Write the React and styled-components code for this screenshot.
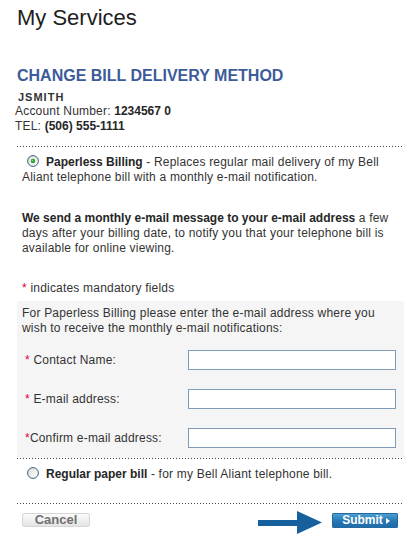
import React from 'react';
import styled, { createGlobalStyle } from 'styled-components';

const GlobalStyle = createGlobalStyle`
  body {
    margin: 0;
    background: #fff;
    font-family: "Liberation Sans", Arial, sans-serif;
    color: #333;
  }
`;

const Page = styled.div`
  width: 387px;
  padding: 5px 2px 0 17px;
  font-size: 12px;
  line-height: 15px;
  letter-spacing: 0.2px;

  b {
    letter-spacing: 0;
    color: #262626;
  }
`;

const Title = styled.h1`
  margin: 0;
  font-size: 22px;
  line-height: 26px;
  font-weight: normal;
  letter-spacing: 0;
  color: #1e1e1e;
`;

const Heading = styled.h2`
  margin: 35px 0 0;
  font-size: 16px;
  line-height: 19px;
  font-weight: bold;
  letter-spacing: 0;
  color: #3d5b99;
`;

const AccountBlock = styled.div`
  margin-top: 6px;
`;

const UserName = styled.div`
  padding-left: 1px;
  font-size: 11px;
  line-height: 13px;
  font-weight: bold;
  letter-spacing: 1px;
`;

const InfoLine = styled.div`
  margin-left: -2px;
`;

const Divider = styled.div`
  margin-top: ${(props) => props.$top || 0}px;
  height: 1px;
  background-image: linear-gradient(to right, #444 1px, transparent 1px);
  background-size: 3px 1px;
`;

const OptionText = styled.p`
  margin: 8px 0 0;
  padding-left: 5px;
`;

const RadioMark = styled.svg`
  width: 12px;
  height: 12px;
  margin: 0 7px 0 5px;
  vertical-align: -1px;
`;

const Notice = styled.p`
  margin: 26px 0 0;
  padding-left: 5px;
`;

const Mandatory = styled.p`
  margin: 25px 0 0;
  padding-left: 5px;
`;

const Req = styled.span`
  color: #e0003a;
`;

const FormBox = styled.div`
  margin-top: 5px;
  padding: 5px 5px 10px;
  background: #f5f5f5;
`;

const FormIntro = styled.p`
  margin: 0;
`;

const FieldGrid = styled.div`
  display: grid;
  grid-template-columns: 163px 208px;
  row-gap: 19px;
  align-items: center;
  margin-top: 14px;
  padding-left: 3px;
`;

const FieldLabel = styled.label`
  line-height: 20px;
`;

const TextInput = styled.input`
  box-sizing: border-box;
  width: 208px;
  height: 20px;
  margin: 0;
  border: 1px solid #7f9db9;
  background: #fff;
  padding: 0 3px;
  font: inherit;
`;

const ActionRow = styled.div`
  display: flex;
  align-items: flex-start;
  justify-content: space-between;
  margin-top: 7px;
  padding: 0 6px 0 5px;
`;

const CancelButton = styled.button`
  width: 68px;
  height: 14px;
  margin-top: 2px;
  padding: 0;
  border: 1px solid #d6d6d6;
  border-radius: 2px;
  background: linear-gradient(#fbfbfb, #e4e4e4);
  color: #707070;
  font-family: "Liberation Sans", Arial, sans-serif;
  font-size: 13px;
  line-height: 12px;
  font-weight: bold;
`;

const SubmitGroup = styled.div`
  display: flex;
  align-items: flex-start;
  gap: 10px;
`;

const PointerArrow = styled.svg`
  width: 64px;
  height: 23px;
`;

const SubmitButton = styled.button`
  display: flex;
  align-items: center;
  justify-content: center;
  gap: 3px;
  width: 66px;
  height: 15px;
  margin-top: 2px;
  padding: 0 0 0 2px;
  border: 1px solid #2469a0;
  border-radius: 1px;
  background: linear-gradient(#4a9ed2, #2677b3 55%, #1f6ca8);
  color: #fff;
  font-family: "Liberation Sans", Arial, sans-serif;
  font-size: 12px;
  line-height: 13px;
  font-weight: bold;
`;

const Caret = styled.span`
  width: 0;
  height: 0;
  border-top: 3px solid transparent;
  border-bottom: 3px solid transparent;
  border-left: 4px solid #fff;
`;

const Radio = ({ checked }) => (
  <RadioMark viewBox="0 0 12 12">
    <defs>
      <linearGradient id={checked ? 'rgOn' : 'rgOff'} x1="0" y1="0" x2="1" y2="1">
        <stop offset="0" stopColor="#dcdcd4" />
        <stop offset="1" stopColor="#ffffff" />
      </linearGradient>
    </defs>
    <circle cx="6" cy="6" r="5.4" fill={`url(#${checked ? 'rgOn' : 'rgOff'})`} stroke="#3a5f86" strokeWidth="1" />
    {checked && <circle cx="6" cy="6" r="2.2" fill="#2aa32a" />}
    {checked && <circle cx="5.5" cy="5.5" r="0.8" fill="#7fdc7f" />}
  </RadioMark>
);

const fields = [
  { id: 'name', mark: '* ', text: 'Contact Name:' },
  { id: 'email', mark: '* ', text: 'E-mail address:' },
  { id: 'confirm', mark: '*', text: 'Confirm e-mail address:' },
];

export default function App() {
  return (
    <>
      <GlobalStyle />
      <Page>
        <Title>My Services</Title>
        <Heading>CHANGE BILL DELIVERY METHOD</Heading>
        <AccountBlock>
          <UserName>JSMITH</UserName>
          <InfoLine>Account Number: <b>1234567 0</b></InfoLine>
          <InfoLine>TEL: <b>(506) 555-1111</b></InfoLine>
        </AccountBlock>

        <Divider $top={12} />
        <OptionText>
          <Radio checked />
          <b>Paperless Billing</b> - Replaces regular mail delivery of my Bell Aliant telephone bill with a monthly e-mail notification.
        </OptionText>

        <Notice>
          <b>We send a monthly e-mail message to your e-mail address</b> a few days after your billing date, to notify you that your telephone bill is available for online viewing.
        </Notice>

        <Mandatory><Req>*</Req> indicates mandatory fields</Mandatory>

        <FormBox>
          <FormIntro>
            For Paperless Billing please enter the e-mail address where you wish to receive the monthly e-mail notifications:
          </FormIntro>
          <FieldGrid>
            {fields.map((f) => (
              <React.Fragment key={f.id}>
                <FieldLabel htmlFor={f.id}><Req>{f.mark}</Req>{f.text}</FieldLabel>
                <TextInput id={f.id} type="text" />
              </React.Fragment>
            ))}
          </FieldGrid>
        </FormBox>

        <Divider />
        <OptionText>
          <Radio />
          <b>Regular paper bill</b> - for my Bell Aliant telephone bill.
        </OptionText>

        <Divider $top={21} />
        <ActionRow>
          <CancelButton type="button">Cancel</CancelButton>
          <SubmitGroup>
            <PointerArrow viewBox="0 0 64 23">
              <rect x="0" y="9" width="41" height="6" fill="#17609e" />
              <polygon points="39,0 64,11.5 39,23" fill="#17609e" />
            </PointerArrow>
            <SubmitButton type="button">Submit<Caret /></SubmitButton>
          </SubmitGroup>
        </ActionRow>
      </Page>
    </>
  );
}
